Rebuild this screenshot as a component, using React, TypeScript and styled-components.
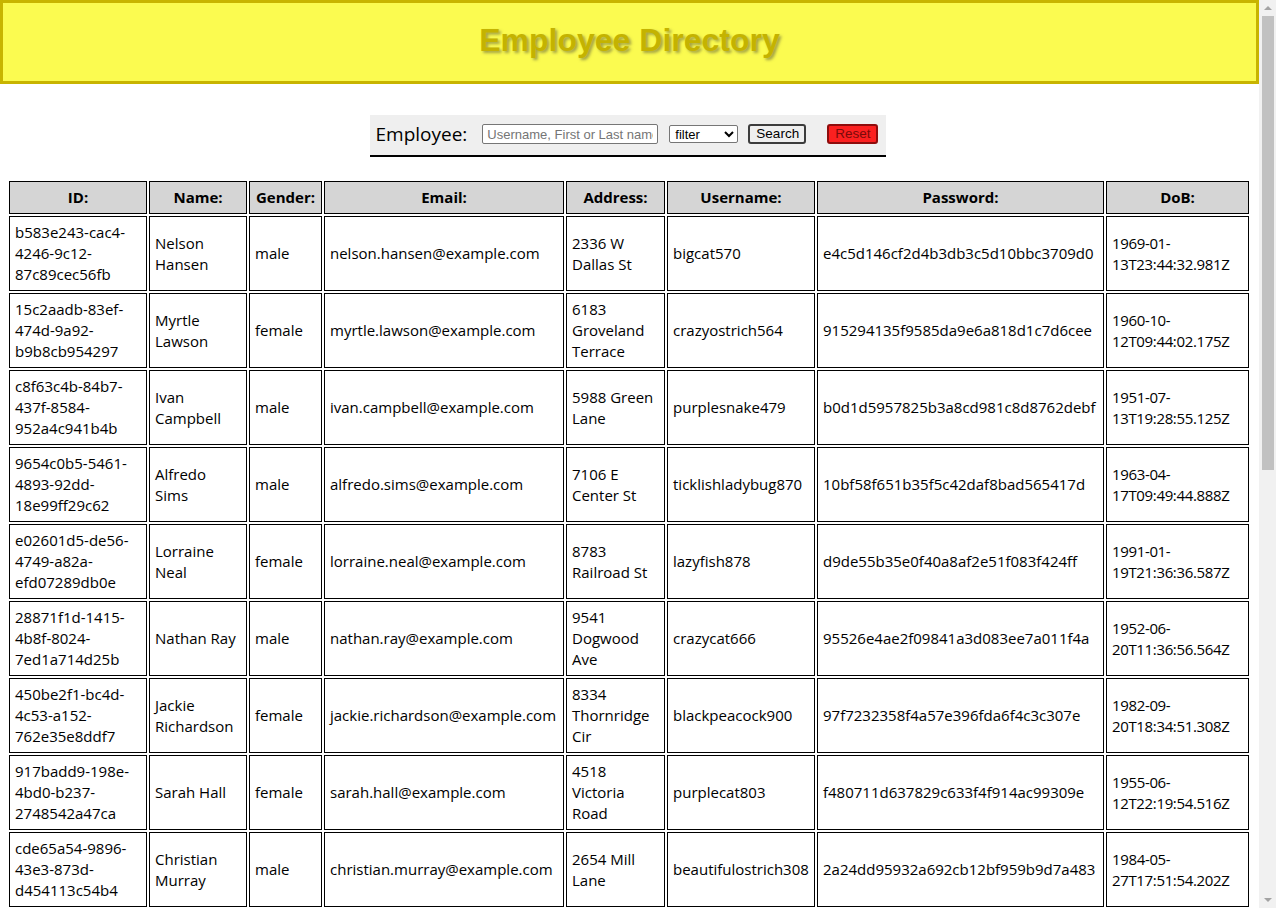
import React from "react";
import styled, { createGlobalStyle } from "styled-components";

const GlobalStyle = createGlobalStyle`
  html, body {
    margin: 0;
    padding: 0;
    background: #ffffff;
    font-family: "Open Sans", "Noto Sans", sans-serif;
    color: #000000;
    overflow: hidden;
  }
`;

type Employee = {
  id: string;
  name: string;
  gender: string;
  email: string;
  address: string;
  username: string;
  password: string;
  dob: string;
};

const employees: Employee[] = [
  { id: "b583e243-cac4-4246-9c12-87c89cec56fb", name: "Nelson Hansen", gender: "male", email: "nelson.hansen@example.com", address: "2336 W Dallas St", username: "bigcat570", password: "e4c5d146cf2d4b3db3c5d10bbc3709d0", dob: "1969-01-13T23:44:32.981Z" },
  { id: "15c2aadb-83ef-474d-9a92-b9b8cb954297", name: "Myrtle Lawson", gender: "female", email: "myrtle.lawson@example.com", address: "6183 Groveland Terrace", username: "crazyostrich564", password: "915294135f9585da9e6a818d1c7d6cee", dob: "1960-10-12T09:44:02.175Z" },
  { id: "c8f63c4b-84b7-437f-8584-952a4c941b4b", name: "Ivan Campbell", gender: "male", email: "ivan.campbell@example.com", address: "5988 Green Lane", username: "purplesnake479", password: "b0d1d5957825b3a8cd981c8d8762debf", dob: "1951-07-13T19:28:55.125Z" },
  { id: "9654c0b5-5461-4893-92dd-18e99ff29c62", name: "Alfredo Sims", gender: "male", email: "alfredo.sims@example.com", address: "7106 E Center St", username: "ticklishladybug870", password: "10bf58f651b35f5c42daf8bad565417d", dob: "1963-04-17T09:49:44.888Z" },
  { id: "e02601d5-de56-4749-a82a-efd07289db0e", name: "Lorraine Neal", gender: "female", email: "lorraine.neal@example.com", address: "8783 Railroad St", username: "lazyfish878", password: "d9de55b35e0f40a8af2e51f083f424ff", dob: "1991-01-19T21:36:36.587Z" },
  { id: "28871f1d-1415-4b8f-8024-7ed1a714d25b", name: "Nathan Ray", gender: "male", email: "nathan.ray@example.com", address: "9541 Dogwood Ave", username: "crazycat666", password: "95526e4ae2f09841a3d083ee7a011f4a", dob: "1952-06-20T11:36:56.564Z" },
  { id: "450be2f1-bc4d-4c53-a152-762e35e8ddf7", name: "Jackie Richardson", gender: "female", email: "jackie.richardson@example.com", address: "8334 Thornridge Cir", username: "blackpeacock900", password: "97f7232358f4a57e396fda6f4c3c307e", dob: "1982-09-20T18:34:51.308Z" },
  { id: "917badd9-198e-4bd0-b237-2748542a47ca", name: "Sarah Hall", gender: "female", email: "sarah.hall@example.com", address: "4518 Victoria Road", username: "purplecat803", password: "f480711d637829c633f4f914ac99309e", dob: "1955-06-12T22:19:54.516Z" },
  { id: "cde65a54-9896-43e3-873d-d454113c54b4", name: "Christian Murray", gender: "male", email: "christian.murray@example.com", address: "2654 Mill Lane", username: "beautifulostrich308", password: "2a24dd95932a692cb12bf959b9d7a483", dob: "1984-05-27T17:51:54.202Z" },
  { id: "3a7d91c2-5e4b-4f08-a1c3-6b2e8d0f94a1", name: "Brandie Lucas", gender: "female", email: "brandie.lucas@example.com", address: "1432 Lakeshore Rd", username: "happyduck412", password: "7c1e0a93b4f25d86e0a3c7b91f2d4e58", dob: "1974-03-08T05:12:40.332Z" },
  { id: "d41e8b06-72c3-49fa-b8d5-0e91c3a7f264", name: "Wesley Ford", gender: "male", email: "wesley.ford@example.com", address: "7780 Hickory Creek Dr", username: "silverlion215", password: "a93f5d02c7e14b68f09d2c3e5a71b846", dob: "1958-11-23T14:06:17.904Z" },
  { id: "8f20c6a7-19bd-4e35-9c4f-a2d7e0b16c83", name: "Gina Wheeler", gender: "female", email: "gina.wheeler@example.com", address: "3905 Parker Rd", username: "orangebird731", password: "5e8b2c47d1a90f36e2b7c4d08a15f93e", dob: "1987-07-02T09:58:21.467Z" },
  { id: "b7c3e158-04a2-4d9e-86f1-3e5a9c2d70b4", name: "Leon Stone", gender: "male", email: "leon.stone@example.com", address: "6204 Pecan Acres Ln", username: "tinygorilla248", password: "c04d9f1e7a35b82e6c1f0d94a7b3e25c", dob: "1966-02-15T20:41:09.118Z" },
  { id: "1e94a3d7-6bf0-42c8-b53e-9d0c7a81f26e", name: "Vickie Hunt", gender: "female", email: "vickie.hunt@example.com", address: "2819 Smokey Ln", username: "redmouse964", password: "e1b7f03a5c92d48e6f0a3b7c1d95e240", dob: "1979-12-04T03:27:55.781Z" },
  { id: "5c08f2b9-a37d-4e61-9f24-c8b1e6d3a075", name: "Derek Bishop", gender: "male", email: "derek.bishop@example.com", address: "9127 Washington Ave", username: "lazypanda187", password: "3f6a0d9c2e74b15a8d3c6f0e9b21a47d", dob: "1948-08-30T16:13:42.650Z" },
  { id: "e6a1d3f4-8c52-47b9-a0e7-52f9b4c1d83a", name: "Kristin Porter", gender: "female", email: "kristin.porter@example.com", address: "4471 Rolling Green Rd", username: "bluefrog522", password: "9d2e5b18f0c73a46e9b1d4f7c0a3e826", dob: "1993-05-19T11:49:03.296Z" },
  { id: "72b9c0e5-3d1f-4a86-bc52-e7a04f9d16c3", name: "Ross Carter", gender: "male", email: "ross.carter@example.com", address: "5560 Valwood Pkwy", username: "goldenbear639", password: "b6c1e8f04a27d93e5b0c6a1f8d42e379", dob: "1971-10-26T07:35:28.843Z" },
  { id: "a3f5e7c2-91b4-4d08-8e6a-04c2b9d7f15e", name: "Sophia Reyes", gender: "female", email: "sophia.reyes@example.com", address: "1876 Oak Lawn Ave", username: "smallswan806", password: "4a9e2c7f1b05d83e6a2c9f0b7d14e58a", dob: "1985-01-09T22:02:16.539Z" },
  { id: "0d8c4b1a-e62f-4395-a7d0-b1e3f58c62d9", name: "Glen Walker", gender: "male", email: "glen.walker@example.com", address: "8642 Depaul Dr", username: "heavytiger351", password: "f7d30a6e9c14b28f5e0d3a7c6b91e04f", dob: "1962-06-14T13:24:58.072Z" },
  { id: "9b2e6f0d-4a83-4c17-b95e-d3c08a7e41f6", name: "Carol Graham", gender: "female", email: "carol.graham@example.com", address: "3317 Hogan St", username: "yellowcat447", password: "2c8f5a1e0d97b36c4f8a2e5d0b13c79e", dob: "1976-09-01T18:57:34.415Z" },
];

const columns: { label: string; width: number }[] = [
  { label: "ID:", width: 138 },
  { label: "Name:", width: 98 },
  { label: "Gender:", width: 73 },
  { label: "Email:", width: 240 },
  { label: "Address:", width: 99 },
  { label: "Username:", width: 148 },
  { label: "Password:", width: 287 },
  { label: "DoB:", width: 143 },
];

/* Window: page content plus the browser's vertical scrollbar */
const Viewport = styled.div`
  display: grid;
  grid-template-columns: 1fr 17px;
  height: 100vh;
`;

const Scroller = styled.div`
  overflow-y: auto;
  scrollbar-width: none;
  &::-webkit-scrollbar {
    display: none;
  }
`;

const ScrollBar = styled.div`
  display: flex;
  flex-direction: column;
  background: #f1f1f1;
`;

const ScrollArrow = styled.div<{ $down?: boolean }>`
  height: 16px;
  flex: none;
  display: flex;
  align-items: center;
  justify-content: center;
  &::before {
    content: "";
    width: 0;
    height: 0;
    border-left: 4px solid transparent;
    border-right: 4px solid transparent;
    ${(p) =>
      p.$down
        ? "border-top: 4px solid #a3a3a3;"
        : "border-bottom: 4px solid #a3a3a3;"}
  }
`;

const Track = styled.div`
  flex: 1;
  display: flex;
  flex-direction: column;
  padding: 0 2px 0 3px;
`;

const Thumb = styled.div`
  height: 454px;
  background: #c1c1c1;
`;

const Page = styled.div`
  display: flex;
  flex-direction: column;
  padding-bottom: 8px;
`;

const Header = styled.header`
  box-sizing: border-box;
  height: 84px;
  background: #fbfb50;
  border: 3px solid #c8b400;
  padding-top: 19px;
  text-align: center;
`;

const Title = styled.h1`
  margin: 0;
  font-family: "Liberation Sans", Arial, sans-serif;
  font-size: 32px;
  font-weight: bold;
  color: #c4b300;
  text-shadow: 2px 2px 3px rgba(90, 90, 60, 0.55);
`;

const SearchRow = styled.div`
  display: flex;
  justify-content: center;
  margin-top: 31px;
  padding-right: 4px;
`;

const SearchBox = styled.form`
  display: flex;
  align-items: center;
  box-sizing: border-box;
  width: 516px;
  height: 42px;
  padding: 0 10px 2px 6px;
  background: #efefef;
  border-bottom: 2px solid #000000;
`;

const Label = styled.label`
  font-family: "Open Sans", sans-serif;
  font-size: 19px;
  color: #000000;
  margin-right: 15px;
  line-height: 24px;
`;

const TextInput = styled.input`
  box-sizing: border-box;
  width: 176px;
  height: 20px;
  padding: 1px 4px;
  border: 1px solid #767676;
  border-radius: 2px;
  font-family: "Liberation Sans", Arial, sans-serif;
  font-size: 13px;
  background: #ffffff;
  margin-right: 11px;
  &::placeholder {
    color: #757575;
  }
`;

const Select = styled.select`
  box-sizing: border-box;
  width: 69px;
  height: 18px;
  padding: 0 0 0 1px;
  border: 1px solid #767676;
  border-radius: 2px;
  font-family: "Liberation Sans", Arial, sans-serif;
  font-size: 13px;
  background: #ffffff;
  color: #000000;
  margin-right: 10px;
`;

const Button = styled.button<{ $danger?: boolean }>`
  box-sizing: border-box;
  height: 20px;
  padding: 0 6px;
  font-family: "Liberation Sans", Arial, sans-serif;
  font-size: 13.5px;
  line-height: 14px;
  border-radius: 3px;
  border: 2px solid ${(p) => (p.$danger ? "#8e0c0c" : "#3c3c3c")};
  background: ${(p) => (p.$danger ? "#fb2020" : "#efefef")};
  color: ${(p) => (p.$danger ? "#7a0a0a" : "#000000")};
  width: ${(p) => (p.$danger ? "51px" : "58px")};
  margin-left: ${(p) => (p.$danger ? "21px" : "0")};
  cursor: pointer;
`;

const TableWrap = styled.div`
  margin-top: 22px;
  padding: 0 8px 0 7px;
`;

const Table = styled.table`
  width: 100%;
  table-layout: fixed;
  border-collapse: separate;
  border-spacing: 2px;
  font-family: "Open Sans", "Noto Sans", sans-serif;
  font-size: 15px;
  line-height: 21px;
`;

const HeadCell = styled.th`
  background: #d5d5d5;
  border: 1px solid #000000;
  padding: 5px;
  font-weight: bold;
  text-align: center;
  color: #000000;
`;

const Cell = styled.td<{ $tight?: boolean }>`
  border: 1px solid #000000;
  padding: 5px;
  vertical-align: middle;
  text-align: left;
  color: #000000;
  letter-spacing: ${(p) => (p.$tight ? "-0.35px" : "normal")};
`;

export default function App() {
  return (
    <>
      <GlobalStyle />
      <Viewport>
        <Scroller>
          <Page>
            <Header>
              <Title>Employee Directory</Title>
            </Header>
            <SearchRow>
              <SearchBox onSubmit={(e) => e.preventDefault()}>
                <Label htmlFor="employee-search">Employee:</Label>
                <TextInput
                  id="employee-search"
                  type="text"
                  placeholder="Username, First or Last name"
                />
                <Select defaultValue="filter">
                  <option value="filter">filter</option>
                  <option value="name">name</option>
                  <option value="username">username</option>
                </Select>
                <Button type="submit">Search</Button>
                <Button type="button" $danger>
                  Reset
                </Button>
              </SearchBox>
            </SearchRow>
            <TableWrap>
              <Table>
                <colgroup>
                  {columns.map((c) => (
                    <col key={c.label} style={{ width: c.width }} />
                  ))}
                </colgroup>
                <thead>
                  <tr>
                    {columns.map((c) => (
                      <HeadCell key={c.label}>{c.label}</HeadCell>
                    ))}
                  </tr>
                </thead>
                <tbody>
                  {employees.map((e) => (
                    <tr key={e.id}>
                      <Cell>{e.id}</Cell>
                      <Cell>{e.name}</Cell>
                      <Cell>{e.gender}</Cell>
                      <Cell>{e.email}</Cell>
                      <Cell>{e.address}</Cell>
                      <Cell>{e.username}</Cell>
                      <Cell>{e.password}</Cell>
                      <Cell $tight>{e.dob}</Cell>
                    </tr>
                  ))}
                </tbody>
              </Table>
            </TableWrap>
          </Page>
        </Scroller>
        <ScrollBar aria-hidden="true">
          <ScrollArrow />
          <Track>
            <Thumb />
          </Track>
          <ScrollArrow $down />
        </ScrollBar>
      </Viewport>
    </>
  );
}
